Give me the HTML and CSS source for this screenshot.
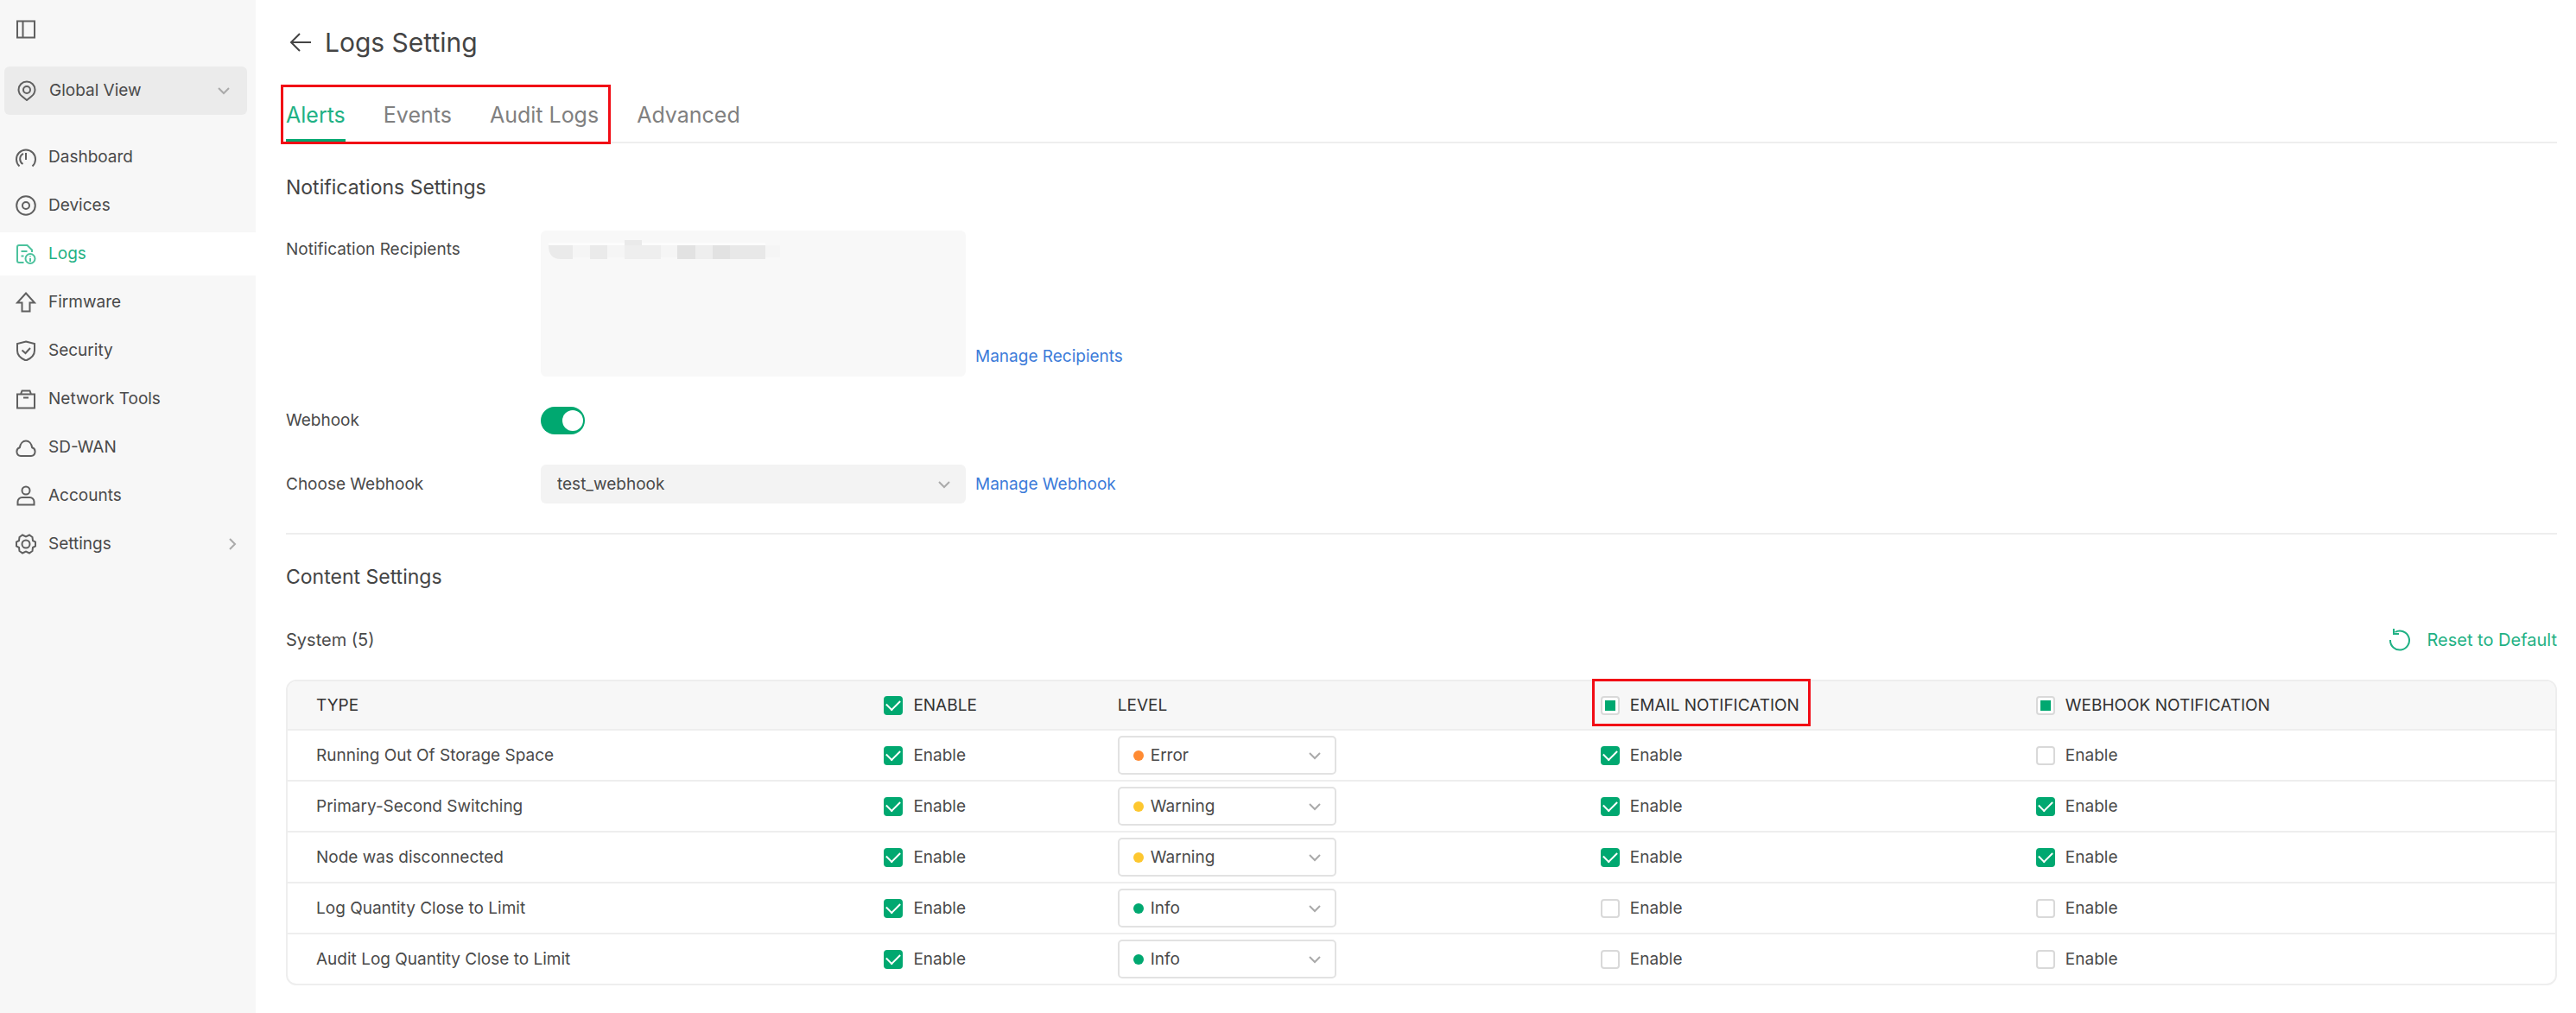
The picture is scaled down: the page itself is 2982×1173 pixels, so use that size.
FILE: index.html
```html
<!DOCTYPE html>
<html lang="en">
<head>
    <meta charset="UTF-8">
    <meta name="viewport" content="width=device-width, initial-scale=1.0">
    <title>Logs Setting</title>
    <link rel="stylesheet" href="styles.css">
</head>
<body>
    <svg class="sprite" aria-hidden="true">
        <symbol id="down" viewBox="0 0 14 14"><path d="M1 4l6 6 6-6"/></symbol>
    </svg>
    <div class="layout">
        <aside class="sidebar">
            <button type="button" class="collapse" aria-label="Collapse menu">
                <svg class="icon" viewBox="0 0 24 24"><path d="M2 2.500h20v19H2zM8.500 2.500v19"/></svg>
            </button>
            <button type="button" class="view">
                <svg class="icon" viewBox="0 0 24 24"><path d="M12 23L6.500 18.500A10 10 0 0 1 2.500 11a9.500 9.500 0 0 1 19 0 10 10 0 0 1-4 7.500z"/><circle cx="12" cy="11" r="4"/></svg>
                <span>Global View</span>
                <svg class="chevron"><use href="#down"/></svg>
            </button>
            <nav class="menu">
                <a href="#">
                    <svg class="icon" viewBox="0 0 24 24"><path d="M4.500 22.500A11 11 0 1 1 19.500 22.500M8.500 20A7 7 0 0 1 9 7.800M12 7v8"/></svg>
                    Dashboard
                </a>
                <a href="#">
                    <svg class="icon" viewBox="0 0 24 24"><circle cx="12" cy="12" r="10.800"/><circle cx="12" cy="12" r="4"/></svg>
                    Devices
                </a>
                <a href="#" class="active">
                    <svg class="icon" viewBox="0 0 24 24"><path d="M9.500 22H4a2 2 0 0 1-2-2V4a2 2 0 0 1 2-2h9.500l5.500 5.500V10M6.500 9h7M6.500 14.500h3"/><circle cx="17" cy="17.500" r="5.500"/><path d="M17 14.500v1M17 17v4"/></svg>
                    Logs
                </a>
                <a href="#">
                    <svg class="icon" viewBox="0 0 24 24"><path d="M12 1.500L22 12.500h-5.500V22.500h-9V12.500H2z"/></svg>
                    Firmware
                </a>
                <a href="#">
                    <svg class="icon" viewBox="0 0 24 24"><path d="M12 1.500l10 2.500v8c0 5-4 9-10 11.500C6 21 2 17 2 12V4z"/><path d="M7.500 11.500l4 3.500 5.500-6"/></svg>
                    Security
                </a>
                <a href="#">
                    <svg class="icon" viewBox="0 0 24 24"><path d="M2 6.500h20v16H2zM6 6.500l1.500-4h9l1.500 4M9 10.500h6"/></svg>
                    Network Tools
                </a>
                <a href="#">
                    <svg class="icon" viewBox="0 0 24 24"><path d="M6 22a5 5 0 0 1-1.200-9.700C5.500 7.500 8.500 4.500 12 4.500s6.500 3 7.200 7.800A5 5 0 0 1 18 22z"/></svg>
                    SD-WAN
                </a>
                <a href="#">
                    <svg class="icon" viewBox="0 0 24 24"><circle cx="12" cy="6" r="4.500"/><path d="M2.500 22.500V19a5 5 0 0 1 5-5h9a5 5 0 0 1 5 5v3.500z"/></svg>
                    Accounts
                </a>
                <a href="#">
                    <svg class="icon" viewBox="0 0 24 24"><path d="M8 1.500l4 2 4-2 3.500 2.500.5 4 3 1.500v5L20 16l-.5 4-3.500 2.500-4-2-4 2L4.500 20 4 16l-3-1.500v-5L4 8l.5-4z"/><circle cx="12" cy="12" r="4.500"/></svg>
                    Settings
                    <svg class="chevron" viewBox="0 0 14 14"><path d="M4 1l6 6-6 6"/></svg>
                </a>
            </nav>
        </aside>

        <main class="content">
            <header class="title">
                <a href="#" aria-label="Back"><svg viewBox="0 0 26 22"><path d="M25 11H2M12 1L2 11l10 10"/></svg></a>
                <h1>Logs Setting</h1>
            </header>

            <nav class="tabs">
                <div class="tab-group">
                    <a href="#" class="active">Alerts</a>
                    <a href="#">Events</a>
                    <a href="#">Audit Logs</a>
                </div>
                <a href="#">Advanced</a>
            </nav>

            <section class="notifications">
                <h2>Notifications Settings</h2>
                <div class="field top">
                    <label for="recipients">Notification Recipients</label>
                    <div class="control">
                        <textarea id="recipients" readonly></textarea>
                        <svg class="mask" viewBox="0 0 268 24">
                            <path fill="#fcfcfc" d="M0 5h251v3H0z"/>
                            <path fill="#f5f5f5" d="M28 8h240v14H28z"/>
                            <path fill="#eaeaea" d="M0 8h28v16H14Q0 24 0 8zM48 8h20v16H48zM88 2h20v6H88z"/>
                            <path fill="#eeeeee" d="M88 8h42v16H88zM170 8h20v16h-20z"/>
                            <path fill="#e2e2e2" d="M149 8h21v16h-21zM190 8h20v16h-20z"/>
                            <path fill="#e8e8e8" d="M210 8h41v16h-41z"/>
                        </svg>
                    </div>
                    <a href="#" class="link">Manage Recipients</a>
                </div>
                <div class="field">
                    <label for="webhook">Webhook</label>
                    <input type="checkbox" class="switch" id="webhook" checked>
                </div>
                <div class="field">
                    <label for="choose">Choose Webhook</label>
                    <div class="control">
                        <select id="choose"><option>test_webhook</option></select>
                        <svg class="chevron"><use href="#down"/></svg>
                    </div>
                    <a href="#" class="link">Manage Webhook</a>
                </div>
            </section>

            <section class="settings">
                <h2>Content Settings</h2>
                <div class="table-head">
                    <h3>System (5)</h3>
                    <button type="button" class="reset">
                        <svg viewBox="0 0 26 26"><path d="M2 13A11 11 0 1 0 7.500 4M6 0v6h6"/></svg>
                        Reset to Default
                    </button>
                </div>
                <div class="table-box">
                    <table>
                        <colgroup>
                            <col class="col-type">
                            <col class="col-enable">
                            <col class="col-level">
                            <col class="col-email">
                            <col>
                        </colgroup>
                        <thead>
                            <tr>
                                <th>TYPE</th>
                                <th><label class="check"><input type="checkbox" checked>ENABLE</label></th>
                                <th>LEVEL</th>
                                <th><label class="check marked"><input type="checkbox" class="partial">EMAIL NOTIFICATION</label></th>
                                <th><label class="check"><input type="checkbox" class="partial">WEBHOOK NOTIFICATION</label></th>
                            </tr>
                        </thead>
                        <tbody>
                            <tr>
                                <td>Running Out Of Storage Space</td>
                                <td><label class="check"><input type="checkbox" checked>Enable</label></td>
                                <td>
                                    <div class="level error">
                                        <select aria-label="Level"><option>Error</option><option>Warning</option><option>Info</option></select>
                                        <svg class="chevron"><use href="#down"/></svg>
                                    </div>
                                </td>
                                <td><label class="check"><input type="checkbox" checked>Enable</label></td>
                                <td><label class="check"><input type="checkbox">Enable</label></td>
                            </tr>
                            <tr>
                                <td>Primary-Second Switching</td>
                                <td><label class="check"><input type="checkbox" checked>Enable</label></td>
                                <td>
                                    <div class="level warning">
                                        <select aria-label="Level"><option>Error</option><option selected>Warning</option><option>Info</option></select>
                                        <svg class="chevron"><use href="#down"/></svg>
                                    </div>
                                </td>
                                <td><label class="check"><input type="checkbox" checked>Enable</label></td>
                                <td><label class="check"><input type="checkbox" checked>Enable</label></td>
                            </tr>
                            <tr>
                                <td>Node was disconnected</td>
                                <td><label class="check"><input type="checkbox" checked>Enable</label></td>
                                <td>
                                    <div class="level warning">
                                        <select aria-label="Level"><option>Error</option><option selected>Warning</option><option>Info</option></select>
                                        <svg class="chevron"><use href="#down"/></svg>
                                    </div>
                                </td>
                                <td><label class="check"><input type="checkbox" checked>Enable</label></td>
                                <td><label class="check"><input type="checkbox" checked>Enable</label></td>
                            </tr>
                            <tr>
                                <td>Log Quantity Close to Limit</td>
                                <td><label class="check"><input type="checkbox" checked>Enable</label></td>
                                <td>
                                    <div class="level info">
                                        <select aria-label="Level"><option>Error</option><option>Warning</option><option selected>Info</option></select>
                                        <svg class="chevron"><use href="#down"/></svg>
                                    </div>
                                </td>
                                <td><label class="check"><input type="checkbox">Enable</label></td>
                                <td><label class="check"><input type="checkbox">Enable</label></td>
                            </tr>
                            <tr>
                                <td>Audit Log Quantity Close to Limit</td>
                                <td><label class="check"><input type="checkbox" checked>Enable</label></td>
                                <td>
                                    <div class="level info">
                                        <select aria-label="Level"><option>Error</option><option>Warning</option><option selected>Info</option></select>
                                        <svg class="chevron"><use href="#down"/></svg>
                                    </div>
                                </td>
                                <td><label class="check"><input type="checkbox">Enable</label></td>
                                <td><label class="check"><input type="checkbox">Enable</label></td>
                            </tr>
                        </tbody>
                    </table>
                </div>
            </section>
        </main>
    </div>
    <script>
        //header boxes of columns that are only partly enabled
        document.querySelectorAll(".partial").forEach(function(box){
            box.indeterminate = true;
        });
    </script>
</body>
</html>
```

FILE: styles.css
```css
*{
    box-sizing: border-box;
}
body{
    margin: 0;
    background: #fff;
    color: #4a4a4a;
    font-family: Inter, "Liberation Sans", sans-serif;
    font-size: 19px;
    line-height: 28px;
}
button, select, textarea{
    font: inherit;
    color: inherit;
    border: none;
    background: none;
    margin: 0;
    padding: 0;
}
a{
    color: inherit;
    text-decoration: none;
}
h1, h2, h3{
    margin: 0;
    font-weight: 400;
}
svg{
    fill: none;
    stroke: currentColor;
    stroke-width: 2;
    flex: none;
}
.sprite{
    display: none;
}
.icon{
    width: 24px;
    height: 24px;
    color: #606060;
}
.chevron{
    width: 14px;
    height: 14px;
    color: #aaa;
}
.layout{
    display: flex;
    min-height: 100vh;
}

/* sidebar */
.sidebar{
    flex: none;
    width: 296px;
    background: #f7f7f7;
    padding-top: 22px;
}
.collapse{
    display: block;
    margin-left: 18px;
    height: 24px;
}
.view{
    display: flex;
    align-items: center;
    gap: 14px;
    width: 281px;
    height: 56px;
    margin: 31px 5px 24px;
    padding: 0 20px 0 14px;
    border-radius: 6px;
    background: #ebebeb;
    text-align: left;
}
.view span{
    flex: 1;
}
.menu{
    display: flex;
    flex-direction: column;
    gap: 6px;
}
.menu a{
    display: flex;
    align-items: center;
    gap: 14px;
    height: 50px;
    padding: 0 20px 0 18px;
}
.menu .chevron{
    margin-left: auto;
}
.menu .active{
    background: #fff;
    color: #1fb184;
}
.menu .active .icon{
    color: #4cc29d;
}

/* page */
.content{
    flex: 1;
    min-width: 0;
    padding: 22px 22px 0 35px;
}
.title{
    display: flex;
    align-items: center;
    gap: 15px;
    height: 54px;
    padding-left: 4px;
    color: #444;
}
.title a{
    display: flex;
}
.title svg{
    width: 26px;
    height: 22px;
}
h1{
    font-size: 30px;
    line-height: 40px;
}
.tabs{
    display: flex;
    gap: 44px;
    margin-top: 22px;
    border-bottom: 2px solid #eee;
    font-size: 25px;
    line-height: 30px;
    color: #808080;
}
.tab-group{
    position: relative;
    display: flex;
    gap: 44px;
}
.tabs a{
    padding: 20px 0 16px;
}
.tabs .active{
    color: #1fb184;
    box-shadow: inset 0 -3px #00a870;
}
.tab-group::after{
    content: "";
    position: absolute;
    inset: 0 -14px -3px -6px;
    border: 3px solid #f10c15;
    pointer-events: none;
}
h2{
    font-size: 23px;
    line-height: 30px;
    color: #444;
}
.notifications{
    display: flex;
    flex-direction: column;
    gap: 35px;
    padding: 36px 0 34px;
    border-bottom: 2px solid #eee;
}
.field{
    display: flex;
    align-items: center;
}
.field.top{
    align-items: flex-start;
}
.field label{
    width: 295px;
}
.top label{
    padding-top: 8px;
}
.control{
    position: relative;
    display: flex;
    width: 492px;
    margin-right: 11px;
}
.control textarea{
    width: 100%;
    height: 169px;
    padding: 12px 19px;
    border-radius: 6px;
    background: #f8f8f8;
    resize: none;
}
.mask{
    position: absolute;
    left: 9px;
    top: 9px;
    width: 268px;
    height: 24px;
    stroke: none;
}
.control select{
    appearance: none;
    width: 100%;
    height: 45px;
    padding: 0 40px 0 19px;
    border-radius: 6px;
    background: #f3f3f3;
}
.control .chevron,
.level .chevron{
    position: absolute;
    right: 18px;
    top: 16px;
    pointer-events: none;
}
.link{
    color: #3c7bd9;
}
.top .link{
    align-self: flex-end;
    padding-bottom: 9px;
}
.switch{
    appearance: none;
    display: flex;
    align-items: center;
    width: 51px;
    height: 32px;
    margin: 0;
    padding: 0 2px;
    border-radius: 16px;
    background: #ccc;
}
.switch:checked{
    justify-content: flex-end;
    background: #00a870;
}
.switch::before{
    content: "";
    width: 24px;
    height: 24px;
    border-radius: 50%;
    background: #fff;
}

/* table */
.settings{
    padding: 34px 0 32px;
}
.table-head{
    display: flex;
    align-items: center;
    justify-content: space-between;
    height: 30px;
    margin: 43px 0 31px;
}
h3{
    font-size: 20px;
}
.reset{
    display: flex;
    align-items: center;
    gap: 18px;
    font-size: 20px;
    color: #1fb184;
}
.reset svg{
    width: 26px;
    height: 26px;
}
.table-box{
    border: 2px solid #eee;
    border-radius: 12px;
}
table{
    width: 100%;
    table-layout: fixed;
    border-spacing: 0;
}
.col-type{
    width: 26.3%;
}
.col-enable{
    width: 10.3%;
}
.col-level{
    width: 21.3%;
}
.col-email{
    width: 19.2%;
}
th, td{
    height: 59px;
    padding: 0;
    text-align: left;
    border-bottom: 2px solid #eee;
}
tr:last-child td{
    height: 57px;
    border-bottom: none;
}
th:first-child,
td:first-child{
    padding-left: 33px;
}
tr th{
    height: 57px;
    background: #f7f7f7;
    color: #333;
    font-weight: 400;
}
th:first-child{
    border-top-left-radius: 10px;
}
th:last-child{
    border-top-right-radius: 10px;
}
.check{
    position: relative;
    display: flex;
    align-items: center;
    gap: 12px;
    width: fit-content;
}
.check input{
    appearance: none;
    display: grid;
    place-items: center;
    width: 22px;
    height: 22px;
    margin: 0;
    border: 2px solid #d9d9d9;
    border-radius: 4px;
    background: #fff;
}
.check input:checked{
    border-color: #00a870;
    background: #00a870;
}
.check input:checked::before{
    content: "";
    width: 8px;
    height: 13px;
    margin-top: -4px;
    border: solid #fff;
    border-width: 0 2px 2px 0;
    transform: rotate(45deg);
}
.check input:indeterminate::before{
    content: "";
    width: 12px;
    height: 12px;
    background: #00a870;
}
.marked::after{
    content: "";
    position: absolute;
    inset: -17px -13px -10px -10px;
    border: 3px solid #f10c15;
    pointer-events: none;
}
.level{
    position: relative;
    width: 253px;
}
.level select{
    appearance: none;
    display: block;
    width: 100%;
    height: 45px;
    padding: 0 40px 0 36px;
    border: 2px solid #e2e2e2;
    border-radius: 5px;
    background: #fff;
}
.level::before{
    content: "";
    position: absolute;
    left: 18px;
    top: 17px;
    width: 12px;
    height: 12px;
    border-radius: 50%;
}
.error::before{
    background: #ff8b33;
}
.warning::before{
    background: #fdc72f;
}
.info::before{
    background: #00a870;
}
```
